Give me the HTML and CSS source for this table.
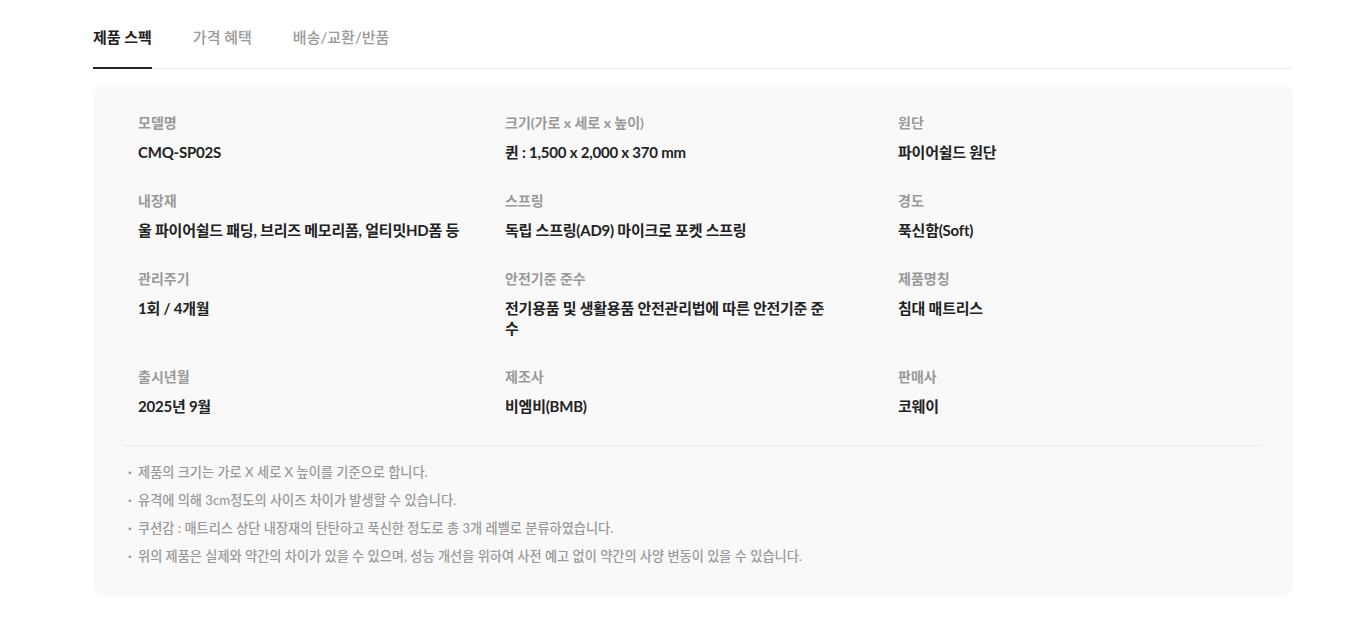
FILE: index.html
```html
<!DOCTYPE html>
<html lang="ko">
<head>
<meta charset="utf-8">
<title>제품 스펙</title>
<link rel="stylesheet" href="styles.css">
</head>
<body>
<div class="wrap">
  <nav class="tabs">
    <a class="tab active">제품 스펙</a>
    <a class="tab">가격 혜택</a>
    <a class="tab">배송/교환/반품</a>
  </nav>
  <section class="panel">
    <div class="specs">
      <div class="item"><div class="label">모델명</div><div class="value">CMQ-SP02S</div></div>
      <div class="item"><div class="label">크기(가로 x 세로 x 높이)</div><div class="value">퀸 : 1,500 x 2,000 x 370 mm</div></div>
      <div class="item"><div class="label">원단</div><div class="value">파이어쉴드 원단</div></div>
      <div class="item"><div class="label">내장재</div><div class="value">울 파이어쉴드 패딩, 브리즈 메모리폼, 얼티밋HD폼 등</div></div>
      <div class="item"><div class="label">스프링</div><div class="value">독립 스프링(AD9) 마이크로 포켓 스프링</div></div>
      <div class="item"><div class="label">경도</div><div class="value">푹신함(Soft)</div></div>
      <div class="item"><div class="label">관리주기</div><div class="value">1회 / 4개월</div></div>
      <div class="item"><div class="label">안전기준 준수</div><div class="value">전기용품 및 생활용품 안전관리법에 따른 안전기준 준수</div></div>
      <div class="item"><div class="label">제품명칭</div><div class="value">침대 매트리스</div></div>
      <div class="item"><div class="label">출시년월</div><div class="value">2025년 9월</div></div>
      <div class="item"><div class="label">제조사</div><div class="value">비엠비(BMB)</div></div>
      <div class="item"><div class="label">판매사</div><div class="value">코웨이</div></div>
    </div>
    <ul class="notes">
      <li>제품의 크기는 가로 X 세로 X 높이를 기준으로 합니다.</li>
      <li>유격에 의해 3cm정도의 사이즈 차이가 발생할 수 있습니다.</li>
      <li>쿠션감 : 매트리스 상단 내장재의 탄탄하고 푹신한 정도로 총 3개 레벨로 분류하였습니다.</li>
      <li>위의 제품은 실제와 약간의 차이가 있을 수 있으며, 성능 개선을 위하여 사전 예고 없이 약간의 사양 변동이 있을 수 있습니다.</li>
    </ul>
  </section>
</div>
</body>
</html>
```

FILE: styles.css
```css
* { box-sizing: border-box; }
html, body { margin: 0; padding: 0; background: #fff; }
body {
  font-family: Lato, "Noto Sans CJK KR", sans-serif;
  color: #222;
  letter-spacing: 0;
}
.wrap {
  width: 1200px;
  margin-left: 93px;
}
.tabs {
  display: flex;
  gap: 41px;
  border-bottom: 1px solid #eee;
  height: 69px;
  padding-top: 25px;
}
.tab {
  font-size: 15px;
  line-height: 24px;
  color: #999;
  font-weight: 500;
  height: 44px;
  cursor: pointer;
}
.tab.active {
  color: #222;
  font-weight: 700;
  border-bottom: 2px solid #222;
}
.panel {
  margin-top: 16px;
  background: #f9f9f9;
  border-radius: 12px;
  padding: 28px 30px 26px;
}
.specs {
  display: grid;
  grid-template-columns: 367px 393px 1fr;
  row-gap: 29px;
  padding: 0 15px 29px;
  border-bottom: 1px solid #ededed;
}
.label {
  font-size: 14px;
  line-height: 20px;
  font-weight: 700;
  color: #999;
  margin-bottom: 9px;
}
.value {
  max-width: 326px;
  font-size: 15px;
  line-height: 20px;
  font-weight: 700;
  color: #222;
  letter-spacing: -0.015em;
}
.notes {
  list-style: none;
  margin: 12px 0 0;
  padding: 0 0 0 5px;
}
.notes li {
  font-size: 13.2px;
  line-height: 28px;
  color: #999;
  font-weight: 500;
  position: relative;
  padding-left: 10px;
}
.notes li::before {
  content: "·";
  position: absolute;
  left: 0;
  top: 0;
  font-weight: 700;
}
```
